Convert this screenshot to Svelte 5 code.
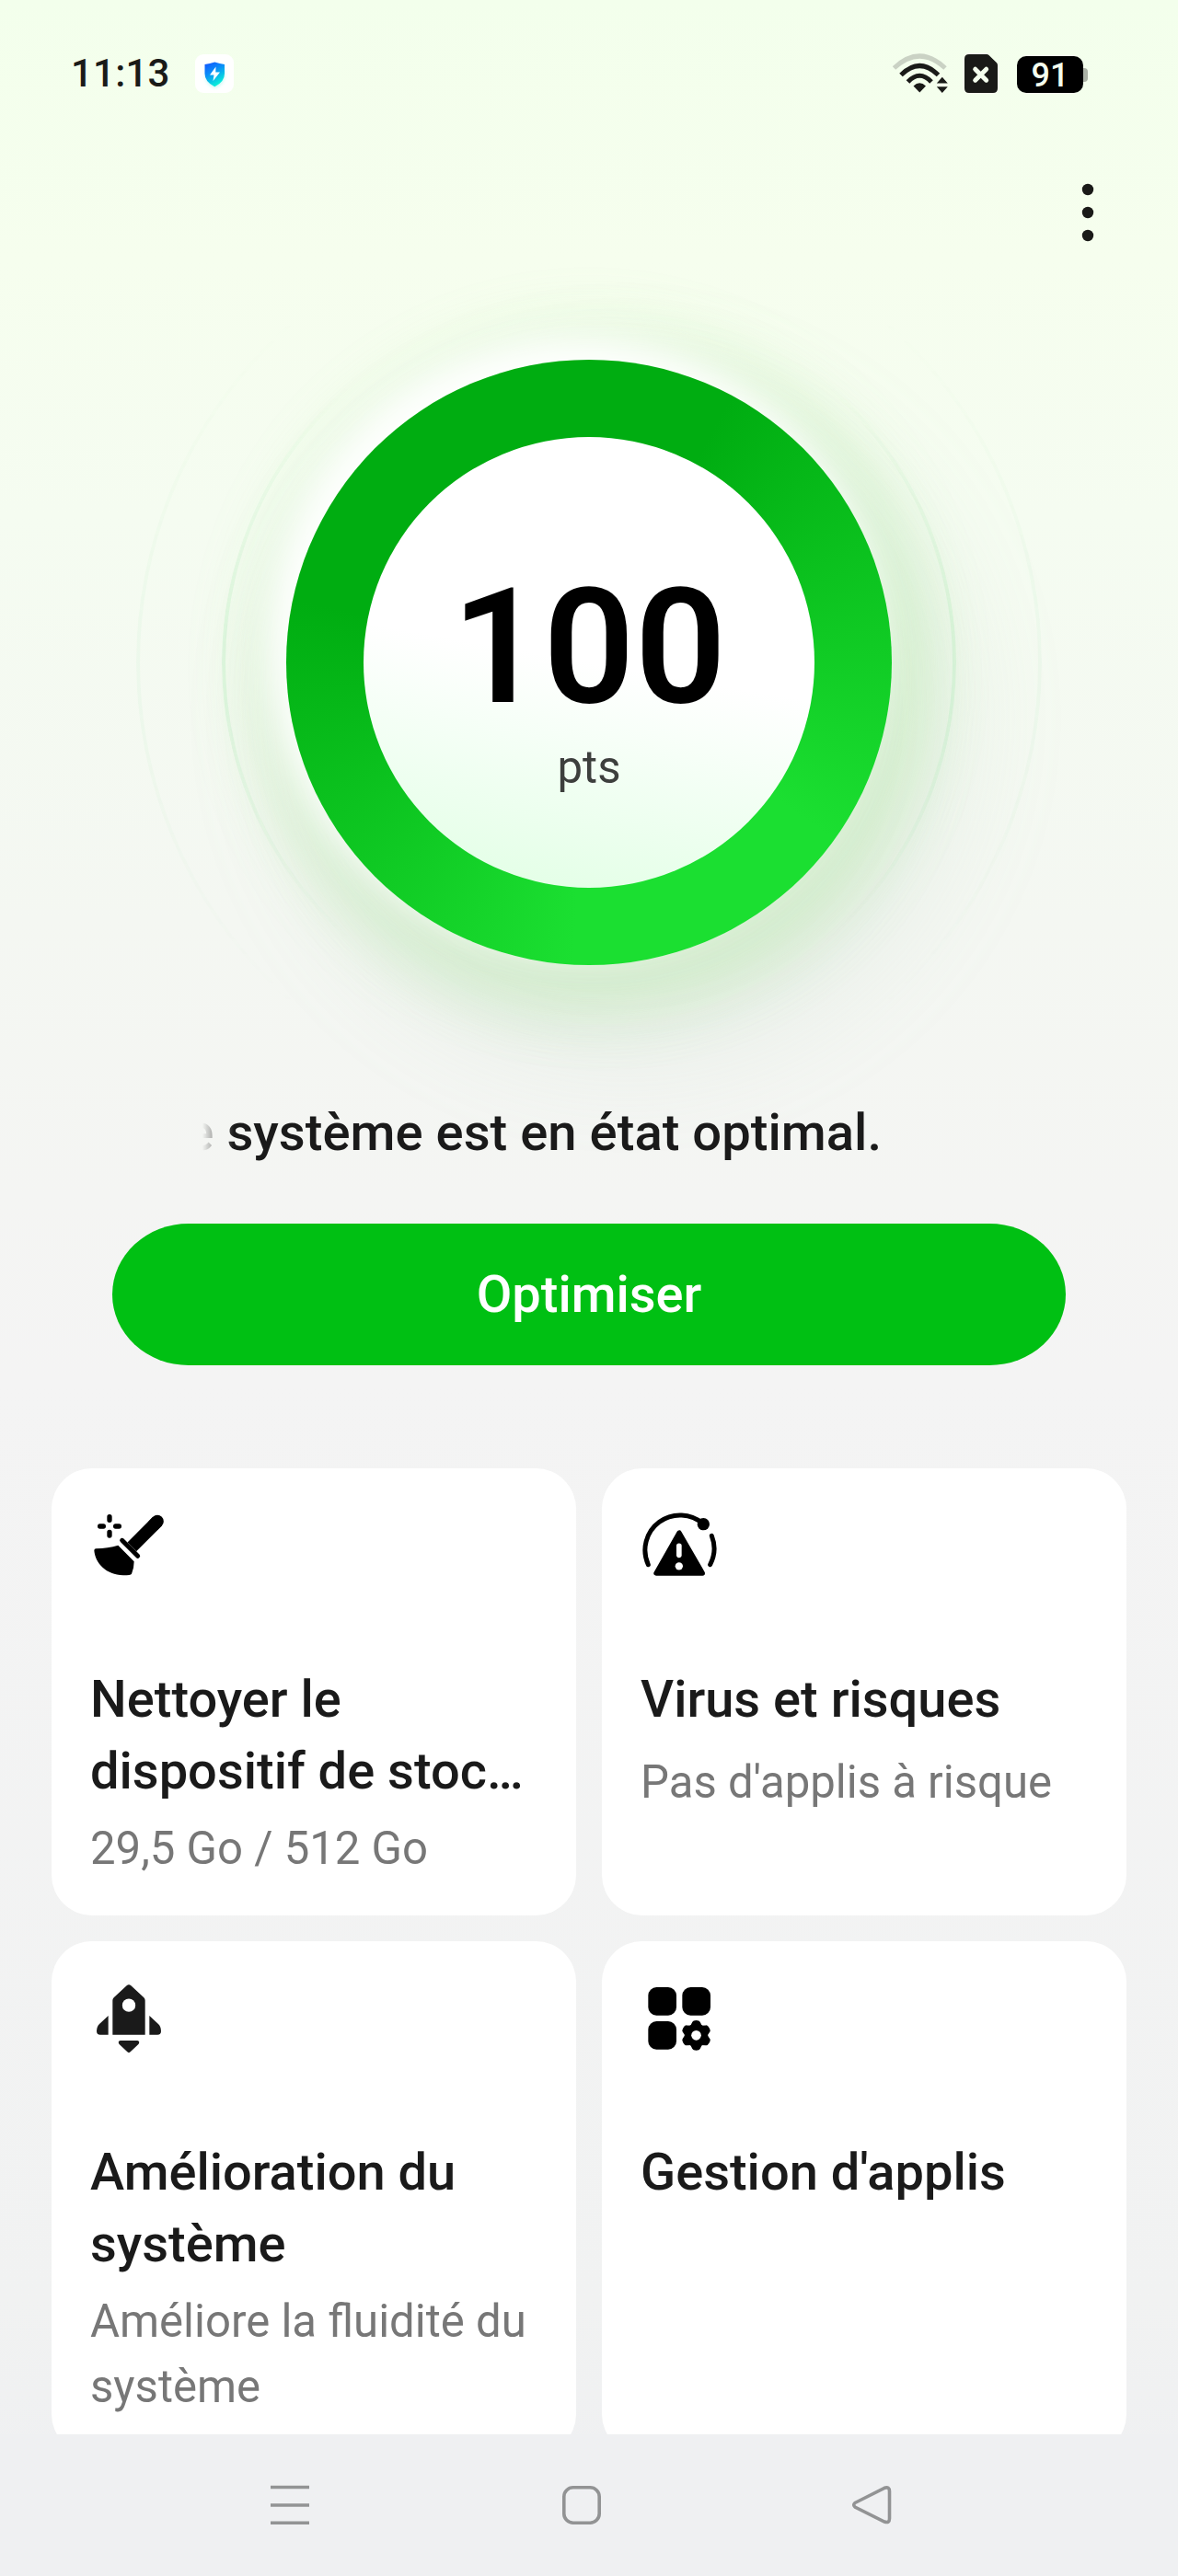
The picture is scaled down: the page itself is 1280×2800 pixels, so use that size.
<script>
  const cards = [
    { icon: 'broom', view: '24 18 264 264', title: 'Nettoyer le dispositif de stoc…', sub: '29,5 Go / 512 Go' },
    { icon: 'risk', view: '33 18 264 264', title: 'Virus et risques', sub: "Pas d'applis à risque", single: true },
    { icon: 'rocket', view: '24 15 264 264', title: 'Amélioration du système', sub: 'Améliore la fluidité du système' },
    { icon: 'apps', view: '33 15 264 264', title: "Gestion d'applis", sub: '' }
  ];
  const teeth = [0, 60, 120, 180, 240, 300];
</script>

<div class="screen">
  <header class="status">
    <span class="time">11:13</span>
    <span class="app-badge">
      <svg width="42" height="42" viewBox="0 0 42 42">
        <defs>
          <linearGradient id="shield" x1="0" y1="0" x2="0.5" y2="1">
            <stop offset="0" stop-color="#1450ff" />
            <stop offset="0.45" stop-color="#0a8cf8" />
            <stop offset="1" stop-color="#08f0d8" />
          </linearGradient>
          <filter id="soft" x="-50%" y="-50%" width="200%" height="200%"><feGaussianBlur stdDeviation="2" /></filter>
        </defs>
        <path d="M12 16H31V24Q31 31 21.5 36Q12 31 12 24Z" fill="#3fe8e0" opacity=".45" filter="url(#soft)" />
        <path d="M10.5 11Q16 10.5 21.3 8.6Q27 10.5 32 11V21Q32 30 21.3 35.200Q10.500 30 10.500 21Z" fill="url(#shield)" />
        <path d="M22.500 13.500L16 22.500H20.500L19.500 29L27 19.500H22.300Z" fill="#fff" />
      </svg>
    </span>
    <span class="spacer"></span>
    <svg class="wifi" width="60" height="44" viewBox="0 0 60 44" fill="none" stroke="#1a1a18" stroke-width="5">
      <path d="M1.500 16Q29.300 -10 57 16" stroke="#cad2c4" />
      <path d="M9 23.500Q29.300 3.500 49.500 23.500" />
      <path d="M16.500 31Q29.300 17.500 42 31" />
      <path d="M22.500 35.500Q29.300 29 36 35.500L29.300 42.500Z" fill="#1a1a18" stroke="none" />
      <path d="M53.800 25.800L59.800 32.500H47.800ZM53.800 43L59.800 36.200H47.800Z" fill="#1a1a18" stroke="none" />
    </svg>
    <svg class="sim" width="36" height="42" viewBox="0 0 36 42">
      <path d="M5 0H24Q25.500 0 26.500 1L35 9.200Q36 10.200 36 12V37Q36 42 31 42H5Q0 42 0 37V5Q0 0 5 0Z" fill="#1a1a18" />
      <path d="M11.700 16.200L23.700 28.200M23.700 16.200L11.700 28.200" stroke="#f5ffee" stroke-width="5" stroke-linecap="round" />
    </svg>
    <span class="battery"><b>91</b></span>
  </header>

  <div class="toolbar">
    <svg width="16" height="66" viewBox="0 0 16 66" fill="#1a1a18">
      <circle cx="8" cy="8" r="6.2" /><circle cx="8" cy="33" r="6.2" /><circle cx="8" cy="58" r="6.2" />
    </svg>
  </div>

  <section class="gauge">
    <div class="ring">
      <div class="dial">
        <strong>100</strong>
        <span>pts</span>
      </div>
    </div>
  </section>

  <div class="ticker"><p>Le système est en état optimal.</p></div>
  <button class="optimise">Optimiser</button>

  <main class="cards">
    {#each cards as card}
      <article class="card">
        <svg class="icon" viewBox={card.view} width="88" height="88">
          {#if card.icon === 'broom'}
            <g stroke="#000" stroke-linecap="round" fill="none">
              <path d="M87 56V67M87 106V117M56 87H67M107 87H118" stroke-width="16" />
              <path d="M243 71L160 154" stroke-width="41" stroke-linecap="butt" />
              <path d="M243 71L230 84" stroke-width="41" />
              <path d="M128 133L179 184" stroke-width="15" />
            </g>
            <path d="M43 160Q82 159 115 149L167 202Q167 224 159 242Q156 247 132 247C76 246 40 207 37 166Q37 160 43 160Z" />
          {:else if card.icon === 'risk'}
            <g fill="none" stroke="#000" stroke-width="15" stroke-linecap="round">
              <path d="M58 212A114 114 0 0 1 238 80M265 118A114 114 0 0 1 260 212" />
            </g>
            <circle cx="238" cy="80" r="20" />
            <path d="M159 108L84 240H235Z" stroke="#000" stroke-width="16" stroke-linejoin="round" />
            <path d="M158.500 151V181" stroke="#fff" stroke-width="17" stroke-linecap="round" />
            <circle cx="158.500" cy="217" r="12.500" fill="#fff" />
          {:else if card.icon === 'rocket'}
            <g fill="#1a1a1a">
              <path d="M97 200V88Q97 83 101 79L143 40Q150 33 157 40L199 79Q203 83 203 88V200Z" />
              <path d="M83 138V200H57Q45 200 45 188Q45 174 54 165ZM217 138V200H243Q255 200 255 188Q255 174 246 165Z" />
              <path d="M122 219H178Q187 221 182 230L155 256Q150 261 145 256L118 230Q113 221 122 219Z" />
            </g>
            <circle cx="150" cy="104" r="21.500" fill="#fff" />
          {:else}
            <rect x="58" y="45" width="92" height="92" rx="27" />
            <rect x="169" y="45" width="92" height="92" rx="27" />
            <rect x="58" y="156" width="92" height="92" rx="27" />
            <circle cx="214.500" cy="202" r="38" />
            {#each teeth as angle}
              <path d="M194 174L202 158Q204 153 214.500 153Q225 153 227 158L235 174Z" transform="rotate({angle} 214.500 202)" />
            {/each}
            <circle cx="214.500" cy="202" r="16" fill="#fff" />
          {/if}
        </svg>
        <h2>{card.title}</h2>
        {#if card.sub}<p class:single={card.single}>{card.sub}</p>{/if}
      </article>
    {/each}
  </main>

  <nav class="navbar">
    <svg width="44" height="44" viewBox="0 0 44 44"><path d="M1 3.500H43M1 23H43M1 42.300H43" /></svg>
    <svg width="44" height="44" viewBox="0 0 44 44"><rect x="2.800" y="3.800" width="38.400" height="38.400" rx="10" /></svg>
    <svg width="44" height="44" viewBox="0 0 44 44"><path d="M3 20.500L35 4.300Q40.500 2.500 40.500 8V37.500Q40.500 43 35 41L3 25Q0.500 22.700 3 20.500Z" /></svg>
  </nav>
</div>

<style>
  :global(body) { margin: 0; }
  .screen {
    width: 1280px;
    height: 2800px;
    overflow: hidden;
    display: flex;
    flex-direction: column;
    font-family: Roboto, "Liberation Sans", sans-serif;
    color: #1a1a1a;
    background: linear-gradient(#f3ffec 0, #f6feee 280px, #f5fcf1 560px, #f4f7f2 1000px, #f4f5f3 1300px, #f4f4f4 1500px, #f1f2f2 2500px, #eff0f2 2700px);
  }
  .status {
    flex: none;
    height: 160px;
    box-sizing: border-box;
    padding: 58px 98px 0 77px;
    display: flex;
    align-items: flex-start;
    color: #1a1a18;
  }
  .time {
    width: 135px;
    margin-top: 1px;
    font-size: 42px;
    font-weight: 500;
    line-height: 42px;
    letter-spacing: .2px;
  }
  .app-badge {
    width: 42px;
    height: 42px;
    margin-top: 1px;
    border-radius: 9px;
    background: #fff;
  }
  .app-badge svg { display: block; }
  .spacer { flex: 1; }
  .wifi { margin-right: 18px; }
  .sim { margin: 1px 21px 0 0; }
  .battery {
    display: flex;
    align-items: center;
    margin-top: 3px;
  }
  .battery b {
    width: 72px;
    height: 40px;
    border-radius: 10px;
    background: #000;
    color: #f5ffee;
    font-size: 36px;
    font-weight: 500;
    line-height: 42px;
    text-align: center;
  }
  .battery::after {
    content: "";
    width: 5px;
    height: 15px;
    border-radius: 0 4px 4px 0;
    background: #abb2a6;
  }
  .toolbar {
    flex: none;
    height: 231px;
    box-sizing: border-box;
    padding: 38px 90px 0 0;
    display: flex;
    justify-content: flex-end;
  }
  .gauge {
    flex: none;
    display: flex;
    justify-content: center;
  }
  .ring {
    position: relative;
    width: 658px;
    height: 658px;
    border-radius: 50%;
    display: grid;
    place-items: center;
    background: conic-gradient(#00ad11 0 28deg, #1bdf31 126deg 183deg, #00ad11 282deg 360deg);
    box-shadow:
      -16px -20px 36px 6px rgba(255, 255, 255, .95),
      0 6px 60px 50px rgba(165, 235, 150, .17),
      14px 30px 60px 30px rgba(150, 220, 135, .16),
      40px 60px 100px 60px rgba(170, 200, 180, .1);
  }
  .ring::before, .ring::after {
    content: "";
    position: absolute;
    inset: -70px;
    border-radius: 50%;
    border: 4px solid rgba(150, 230, 165, .22);
    box-sizing: border-box;
    mask-image: linear-gradient(transparent 12%, #000 45% 55%, transparent 88%);
  }
  .ring::after {
    inset: -163px;
    border-color: rgba(150, 230, 165, .08);
  }
  .dial {
    width: 490px;
    height: 490px;
    border-radius: 50%;
    display: flex;
    flex-direction: column;
    align-items: center;
    background: linear-gradient(190deg, #fff 50%, #e4ffe7 94%);
  }
  .dial strong {
    margin-top: 141px;
    font-size: 174px;
    font-weight: 600;
    line-height: 176px;
    color: #000;
  }
  .dial span {
    margin-top: 14px;
    font-size: 49.200px;
    line-height: 56px;
    color: #3d3f3d;
  }
  .ticker {
    flex: none;
    width: 840px;
    margin: 143px auto 0;
    overflow: hidden;
    mask-image: linear-gradient(90deg, transparent 0, #000 34px);
  }
  .ticker p {
    margin: 0 0 0 -48px;
    font-size: 56.200px;
    font-weight: 500;
    line-height: 78px;
    white-space: nowrap;
  }
  .optimise {
    flex: none;
    width: 1036px;
    height: 154px;
    margin: 60px auto 0;
    padding: 0;
    border: 0;
    border-radius: 83px / 77px;
    background: #00c013;
    color: #fff;
    font: 500 56px/154px Roboto, "Liberation Sans", sans-serif;
  }
  .cards {
    height: 1050px;
    flex: none;
    margin-top: 112px;
    padding: 0 56px;
    overflow: hidden;
    display: grid;
    grid-template-columns: 570px 570px;
    grid-template-rows: 486px 558px;
    gap: 28px;
  }
  .card {
    box-sizing: border-box;
    padding: 40px 42px;
    border-radius: 44px;
    background: #fff;
  }
  .icon { display: block; }
  .card h2 {
    margin: 84px 0 0;
    font-size: 56px;
    font-weight: 500;
    line-height: 78px;
  }
  .card p {
    margin: 10px 0 0;
    font-size: 49.100px;
    line-height: 71px;
    color: #777;
  }
  .card p.single { margin-top: 16px; }
  .navbar {
    flex: 1;
    display: flex;
    justify-content: space-between;
    padding: 54px 310px 0 293px;
    background: #eff0f2;
  }
  .navbar svg {
    fill: none;
    stroke: #929394;
    stroke-width: 3.6;
  }
</style>
